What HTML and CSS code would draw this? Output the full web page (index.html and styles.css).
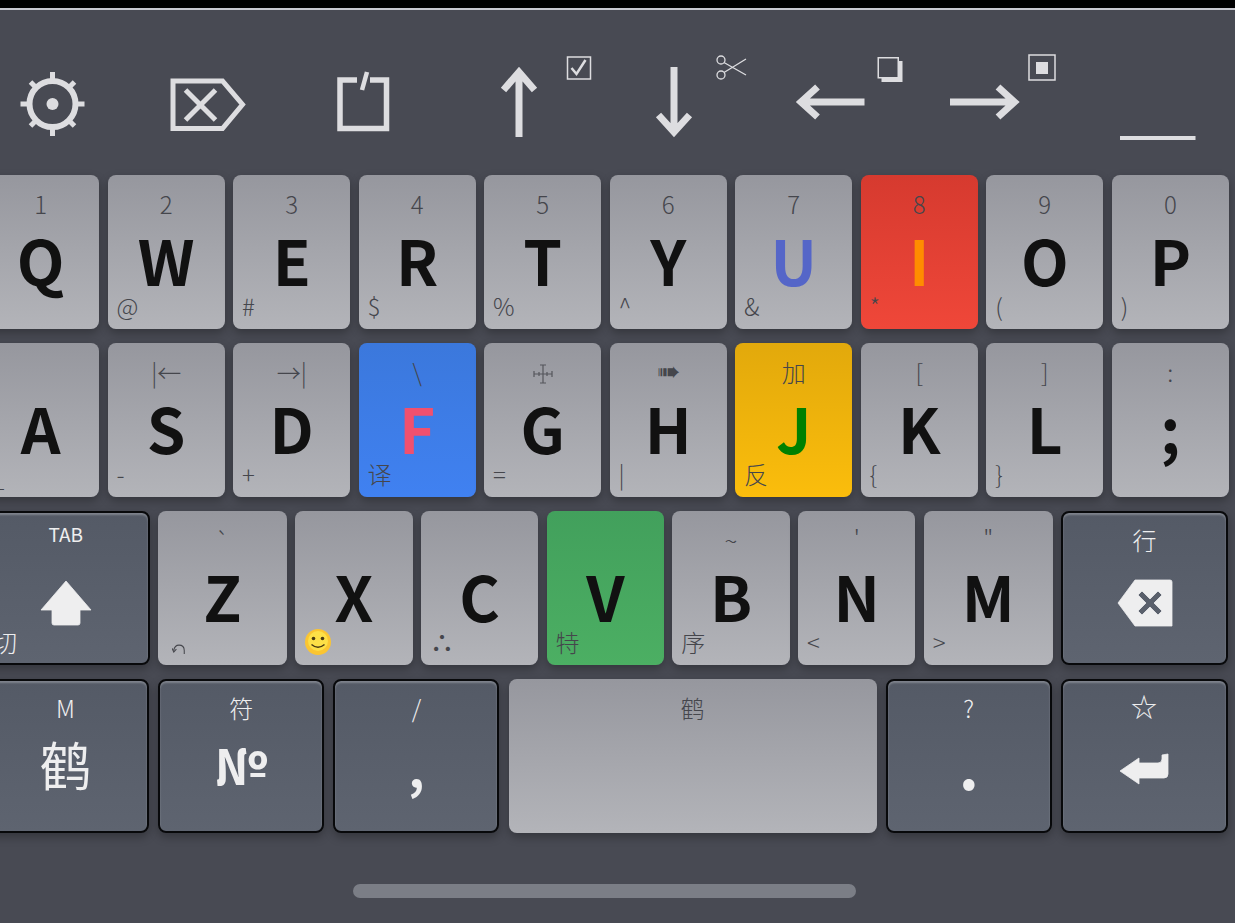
FILE: index.html
```html
<!DOCTYPE html>
<html lang="zh-CN">

<head>
	<meta charset="utf-8">
	<title>鹤</title>
	<link rel="stylesheet" href="styles.css">
</head>

<body>

	<div class="topbar"></div>

	<div class="tools">
		<div class="tool">
			<svg viewBox="-26 10 155.5 165">
				<g class="line" stroke-width="6"><circle cx="52.5" cy="104" r="23"/></g>
				<g class="line" stroke-width="5">
					<path d="M52.5 72v9M52.5 127v9M20.500 104h9M75.500 104h9M30.500 82l5 5M69.500 121l5 5M74.500 82l-5 5M35.500 121l-5 5"/>
				</g>
				<circle class="fill" cx="52.500" cy="104" r="6"/>
			</svg>
		</div>
		<div class="tool">
			<svg viewBox="129.500 10 155.500 165">
				<path class="line" stroke-width="5" d="M172.500 81H222L242 104.500 222 128.500H172.500Z"/>
				<path class="line" stroke-width="5" d="M185 90l30 30M215 90l-30 30"/>
			</svg>
		</div>
		<div class="tool">
			<svg viewBox="285 10 155.500 165">
				<path class="line" stroke-width="5.500" d="M357 80H340V128.500H386.500V80H370"/>
				<path class="line" stroke-width="4.500" d="M367 72l-5 18"/>
			</svg>
		</div>
		<div class="tool">
			<svg viewBox="440.500 10 155.500 165">
				<path class="line" stroke-width="7" d="M518.500 72V137M503 90L518.500 72 534 90"/>
				<rect class="line" stroke-width="1.500" x="567" y="57" width="23" height="22"/>
				<path class="line" stroke-width="2.500" d="M571 68l5 6 9-14"/>
			</svg>
		</div>
		<div class="tool">
			<svg viewBox="596 10 155.500 165">
				<path class="line" stroke-width="7" d="M674 67V132M658.500 115L674 132 689.500 115"/>
				<g class="line" stroke-width="1.300">
					<circle cx="721" cy="60" r="4"/>
					<circle cx="721" cy="75" r="4"/>
					<path d="M724 62.500L746 75M724 72.500L746 59"/>
				</g>
			</svg>
		</div>
		<div class="tool">
			<svg viewBox="751.500 10 155.500 165">
				<path class="line" stroke-width="7" d="M864 102H800.500M817 87L800.500 102 817 117"/>
				<rect class="fill" x="881" y="61" width="21" height="21"/>
				<rect class="outline" x="877.750" y="57.750" width="20" height="20"/>
			</svg>
		</div>
		<div class="tool">
			<svg viewBox="907 10 155.500 165">
				<path class="line" stroke-width="7" d="M950 102H1014.500M998 87L1014.500 102 998 117"/>
				<rect class="line" stroke-width="1.500" x="1029" y="55" width="26" height="25"/>
				<rect class="fill" x="1036" y="62" width="12" height="12"/>
			</svg>
		</div>
		<div class="tool">
			<svg viewBox="1062.500 10 155.500 165">
				<rect class="fill" x="1119.500" y="136" width="75.500" height="4"/>
			</svg>
		</div>
	</div>

	<div class="keyboard">
		<div class="row">
			<div class="key"><span class="top">1</span><span class="main">Q</span><span class="hint"></span></div>
			<div class="key"><span class="top">2</span><span class="main">W</span><span class="hint">@</span></div>
			<div class="key"><span class="top">3</span><span class="main">E</span><span class="hint">#</span></div>
			<div class="key"><span class="top">4</span><span class="main">R</span><span class="hint">$</span></div>
			<div class="key"><span class="top">5</span><span class="main">T</span><span class="hint">%</span></div>
			<div class="key"><span class="top">6</span><span class="main">Y</span><span class="hint">^</span></div>
			<div class="key"><span class="top">7</span><span class="main c-blue">U</span><span class="hint">&amp;</span></div>
			<div class="key red"><span class="top">8</span><span class="main c-orange">I</span><span class="hint">*</span></div>
			<div class="key"><span class="top">9</span><span class="main">O</span><span class="hint">(</span></div>
			<div class="key"><span class="top">0</span><span class="main">P</span><span class="hint">)</span></div>
		</div>

		<div class="row">
			<div class="key"><span class="top"></span><span class="main">A</span><span class="hint under">_</span></div>
			<div class="key"><span class="top">|←</span><span class="main">S</span><span class="hint">-</span></div>
			<div class="key"><span class="top">→|</span><span class="main">D</span><span class="hint">+</span></div>
			<div class="key blue"><span class="top">\</span><span class="main c-pink">F</span><span class="hint">译</span></div>
			<div class="key">
				<span class="top">
					<svg class="tiny" viewBox="0 0 20 20">
						<path d="M10 1V19M1 10H19M7 1H13M7 19H13M1 7V13M19 7V13M6 8V12M14 8V12"/>
					</svg>
				</span>
				<span class="main">G</span><span class="hint">=</span>
			</div>
			<div class="key"><span class="top dingbat wide">➠</span><span class="main">H</span><span class="hint">|</span></div>
			<div class="key yellow"><span class="top">加</span><span class="main c-green">J</span><span class="hint">反</span></div>
			<div class="key"><span class="top">[</span><span class="main">K</span><span class="hint">{</span></div>
			<div class="key"><span class="top">]</span><span class="main">L</span><span class="hint">}</span></div>
			<div class="key"><span class="top">:</span><span class="main">;</span><span class="hint"></span></div>
		</div>

		<div class="row">
			<div class="key dark shift">
				<span class="top tab">TAB</span>
				<span class="main">
					<svg class="glyph g-shift" viewBox="0 0 52 46">
						<path d="M26 1L51 30H40V43Q40 45 38 45H14Q12 45 12 43V30H1Z"/>
					</svg>
				</span>
				<span class="hint">切</span>
			</div>
			<div class="key w129">
				<span class="top">`</span><span class="main">Z</span>
				<span class="hint">
					<svg class="undo" viewBox="0 0 16 14">
						<path d="M14 12V8Q14 2 8 2 3 2 2 8M0 5.500L2 10 5 6.500"/>
					</svg>
				</span>
			</div>
			<div class="key w117">
				<span class="top"></span><span class="main">X</span>
				<span class="hint">
					<svg class="emoji" viewBox="0 0 28 28">
						<circle cx="14" cy="14" r="13" fill="#fbc531"/>
						<circle cx="14" cy="13" r="10" fill="#fde047"/>
						<circle cx="9.500" cy="10.500" r="1.800" fill="#4a3a12"/>
						<circle cx="18.500" cy="10.500" r="1.800" fill="#4a3a12"/>
						<path d="M7.500 16.500Q14 22 20.500 16.500" fill="none" stroke="#4a3a12" stroke-width="1.500"/>
					</svg>
				</span>
			</div>
			<div class="key w117"><span class="top"></span><span class="main">C</span><span class="hint dots">∴</span></div>
			<div class="key green w117"><span class="top"></span><span class="main">V</span><span class="hint">特</span></div>
			<div class="key w117"><span class="top">~</span><span class="main">B</span><span class="hint">序</span></div>
			<div class="key w117"><span class="top">'</span><span class="main">N</span><span class="hint">&lt;</span></div>
			<div class="key w129"><span class="top">"</span><span class="main">M</span><span class="hint">&gt;</span></div>
			<div class="key dark w167">
				<span class="top">行</span>
				<span class="main">
					<svg class="glyph g-back" viewBox="0 0 56 46">
						<path fill-rule="evenodd" d="M18 0H53Q55 0 55 2V46H18L1 23ZM21 15L25 11 33 19 41 11 45 15 37 23 45 31 41 35 33 27 25 35 21 31 29 23Z"/>
					</svg>
				</span>
				<span class="hint"></span>
			</div>
		</div>

		<div class="row row-wide">
			<div class="key dark w167"><span class="top">M</span><span class="main cjk">鹤</span><span class="hint"></span></div>
			<div class="key dark w166"><span class="top">符</span><span class="main numero">№</span><span class="hint"></span></div>
			<div class="key dark w166"><span class="top">/</span><span class="main comma">,</span><span class="hint"></span></div>
			<div class="key space"><span class="top">鹤</span><span class="main"></span><span class="hint"></span></div>
			<div class="key dark w166"><span class="top">?</span><span class="main">.</span><span class="hint"></span></div>
			<div class="key dark w167">
				<span class="top dingbat star">☆</span>
				<span class="main">
					<svg class="glyph g-enter" viewBox="0 0 48 30">
						<path d="M0 17L19 4V9H38Q42 9 42 5V1L48 0V20Q48 24 44 24H19V30Z"/>
					</svg>
				</span>
				<span class="hint"></span>
			</div>
		</div>
	</div>

	<div class="homebar"></div>

</body>

</html>
```

FILE: styles.css
```css
* {
	padding: 0px;
	margin: 0px;
	box-sizing: border-box;
}

html,
body {
	height: 100%;
	overflow: hidden;
}

body {
	background-color: #484a53;
	font-family: "Noto Sans CJK SC", "Noto Sans", "DejaVu Sans", sans-serif;
	color: #45464c;
}

.topbar {
	height: 10px;
	background-color: #000;
	border-bottom: 2px solid #c8c9d0;
}

/* toolbar */
.tools {
	display: flex;
	height: 165px;
	margin-left: -26px;
}

.tool {
	flex: 0 0 155.5px;
	height: 165px;
}

.tool svg {
	display: block;
	width: 155.5px;
	height: 165px;
}

.line,
.outline {
	fill: none;
	stroke: #dddde0;
}

.outline {
	fill: #484a53;
	stroke-width: 1.5;
}

.fill {
	fill: #dddde0;
}

/* keys */
.keyboard {
	display: flex;
	flex-direction: column;
	gap: 14px;
	width: 1247px;
	margin-left: -18px;
}

.row {
	display: flex;
	gap: 8.2px;
	height: 154px;
}

.row-wide {
	gap: 9.2px;
}

.key {
	flex: 1 1 0;
	min-width: 0;
	height: 154px;
	padding-top: 14.5px;
	display: flex;
	flex-direction: column;
	border-radius: 8px;
	background: linear-gradient(#96979e, #b3b4b9);
	box-shadow: 0 4px 10px rgba(0, 0, 0, 0.28);
}

.top {
	height: 28px;
	line-height: 28px;
	font-size: 24px;
	font-weight: 300;
	text-align: center;
}

.top.tab {
	margin-top: -6px;
	margin-bottom: 6px;
	font-size: 19px;
	font-weight: 400;
}

.main {
	height: 59px;
	margin-top: 12.5px;
	line-height: 59px;
	font-size: 62px;
	font-weight: 700;
	text-align: center;
	color: #111;
}

.hint {
	height: 28px;
	margin-top: 3px;
	padding-left: 9px;
	line-height: 28px;
	font-size: 24px;
	font-weight: 300;
}

.hint.under {
	line-height: 34px;
}

.hint.dots {
	font-weight: 700;
}

.dingbat {
	font-family: "DejaVu Sans", sans-serif;
	font-size: 20px;
}

.dingbat.wide {
	font-size: 28px;
}

.dingbat.star {
	font-size: 26px;
}

.tiny {
	width: 20px;
	height: 20px;
	fill: none;
	stroke: #55565c;
	stroke-width: 1.2;
	vertical-align: -2px;
}

.undo {
	width: 14px;
	height: 13px;
	margin-left: 5px;
	fill: none;
	stroke: #45464c;
	stroke-width: 1.2;
	vertical-align: -4px;
}

.emoji {
	width: 28px;
	height: 28px;
	vertical-align: -3px;
}

.glyph {
	display: block;
	margin: 0 auto;
	fill: #eeeeef;
	stroke: #eeeeef;
	stroke-width: 0.8;
	stroke-linejoin: round;
	overflow: visible;
}

.g-shift {
	width: 52px;
	height: 46px;
	margin-top: 14px;
}

.g-back {
	width: 56px;
	height: 46px;
	margin-top: 14px;
}

.g-enter {
	width: 48px;
	height: 30px;
	margin-top: 20px;
}

.red {
	background: linear-gradient(#d63a2f, #ef4739);
}

.blue {
	background: linear-gradient(#3b78dc, #4081f1);
}

.yellow {
	background: linear-gradient(#e2a90c, #fbbd0c);
}

.green {
	background: linear-gradient(#42a05c, #4caf63);
}

.c-blue {
	color: #5566c8;
}

.c-orange {
	color: #ff8c00;
}

.c-pink {
	color: #f0506e;
}

.c-green {
	color: #008000;
}

.dark {
	border: 2px solid #08090b;
	padding-top: 12.5px;
	background: linear-gradient(#545a66, #5e6470);
	box-shadow: inset 0 2px 2px rgba(255, 255, 255, 0.25), 0 4px 10px rgba(0, 0, 0, 0.28);
	color: #eeeeef;
}

.dark .main {
	color: #eeeeef;
}

.dark .cjk {
	font-size: 52px;
	font-weight: 400;
}

.numero {
	font-size: 50px;
}

.comma {
	font-size: 50px;
	line-height: 65px;
}

.shift {
	flex: 0 0 167.6px;
}

.w117 {
	flex: 0 0 117.5px;
}

.w129 {
	flex: 0 0 129.25px;
}

.w166 {
	flex: 0 0 166px;
}

.w167 {
	flex: 0 0 167px;
}

.space {
	flex: 0 0 368px;
}

.homebar {
	width: 503px;
	height: 14px;
	margin: 51px 0px 0px 353px;
	border-radius: 7px;
	background-color: #7b7e86;
}
```
